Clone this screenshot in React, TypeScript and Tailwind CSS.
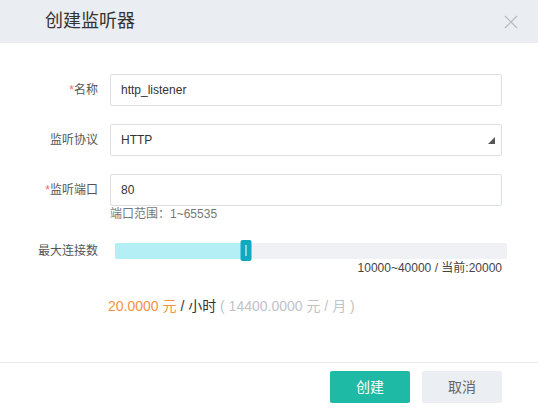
const font = {
  fontFamily: '"Liberation Sans", Arial, "Noto Sans CJK SC", sans-serif',
};

const Label = ({ text, required }: { text: string; required?: boolean }) => (
  <div className="w-[98px] shrink-0 text-right text-[12px] text-[#555]">
    {required && <span className="text-[#ef6b6b]">*</span>}
    {text}
  </div>
);

const Field = ({ children }: { children: React.ReactNode }) => (
  <div className="relative flex h-8 w-full items-center rounded-[2px] border border-[#dde0e5] bg-white pl-[10px] text-[12px] text-[#333]">
    {children}
  </div>
);

export default function App() {
  const min = 10000;
  const max = 40000;
  const value = 20000;
  const pct = ((value - min) / (max - min)) * 100;

  return (
    <div className="h-[409px] w-[538px] overflow-hidden bg-white" style={font}>
      {/* header */}
      <div className="flex h-[43px] items-center justify-between bg-[#eaedf1] pl-[45px] pr-[20px]">
        <span className="text-[18px] text-[#333]">创建监听器</span>
        <svg width="14" height="14" viewBox="0 0 14 14" className="text-[#b4b8bd]">
          <path d="M1 1L13 13M13 1L1 13" stroke="currentColor" strokeWidth="1.1" />
        </svg>
      </div>

      {/* form */}
      <div className="flex flex-col pr-[36px] pt-[31px]">
        <div className="flex items-center gap-3">
          <Label text="名称" required />
          <Field>http_listener</Field>
        </div>

        <div className="mt-[18px] flex items-center gap-3">
          <Label text="监听协议" />
          <Field>
            HTTP
            <svg width="7" height="7" viewBox="0 0 7 7" className="absolute bottom-[11px] right-[6px]">
              <path d="M7 0L7 7L0 7Z" fill="#555" />
            </svg>
          </Field>
        </div>

        <div className="mt-[18px] flex items-center gap-3">
          <Label text="监听端口" required />
          <Field>80</Field>
        </div>
        <div className="pl-[110px] text-[12px] leading-4 text-[#777]">端口范围：1~65535</div>

        <div className="mt-5 flex items-center gap-3">
          <Label text="最大连接数" />
          <div className="relative ml-[5px] mr-[-5px] h-4 w-full rounded-[2px] bg-[#eff1f4]">
            <div className="h-full rounded-l-[2px] bg-[#b5eff6]" style={{ width: `${pct}%` }} />
            <div
              className="absolute top-[-3px] flex h-[21px] w-[11px] -translate-x-1/2 items-center justify-center rounded-[2px] bg-[#10a9c1]"
              style={{ left: `${pct}%` }}
            >
              <div className="h-[11px] w-px bg-white" />
            </div>
          </div>
        </div>
        <div className="text-right text-[12px] leading-4 text-[#444]">
          10000~40000 / 当前:20000
        </div>

        <div className="mt-5 pl-[108px] text-[14px] leading-5">
          <span className="text-[#f5923e]">20.0000 元</span>
          <span className="text-[#333]"> / 小时 </span>
          <span className="text-[#bfc3c8]">( 14400.0000 元 / 月 )</span>
        </div>
      </div>

      {/* footer */}
      <div className="mt-[46px] flex justify-end gap-3 border-t border-[#e8eaed] pr-[36px] pt-2">
        <button className="h-8 w-20 rounded-[2px] bg-[#1fbaa5] text-[14px] text-white">创建</button>
        <button className="h-8 w-20 rounded-[2px] bg-[#ebeef2] text-[14px] text-[#666]">取消</button>
      </div>
    </div>
  );
}
